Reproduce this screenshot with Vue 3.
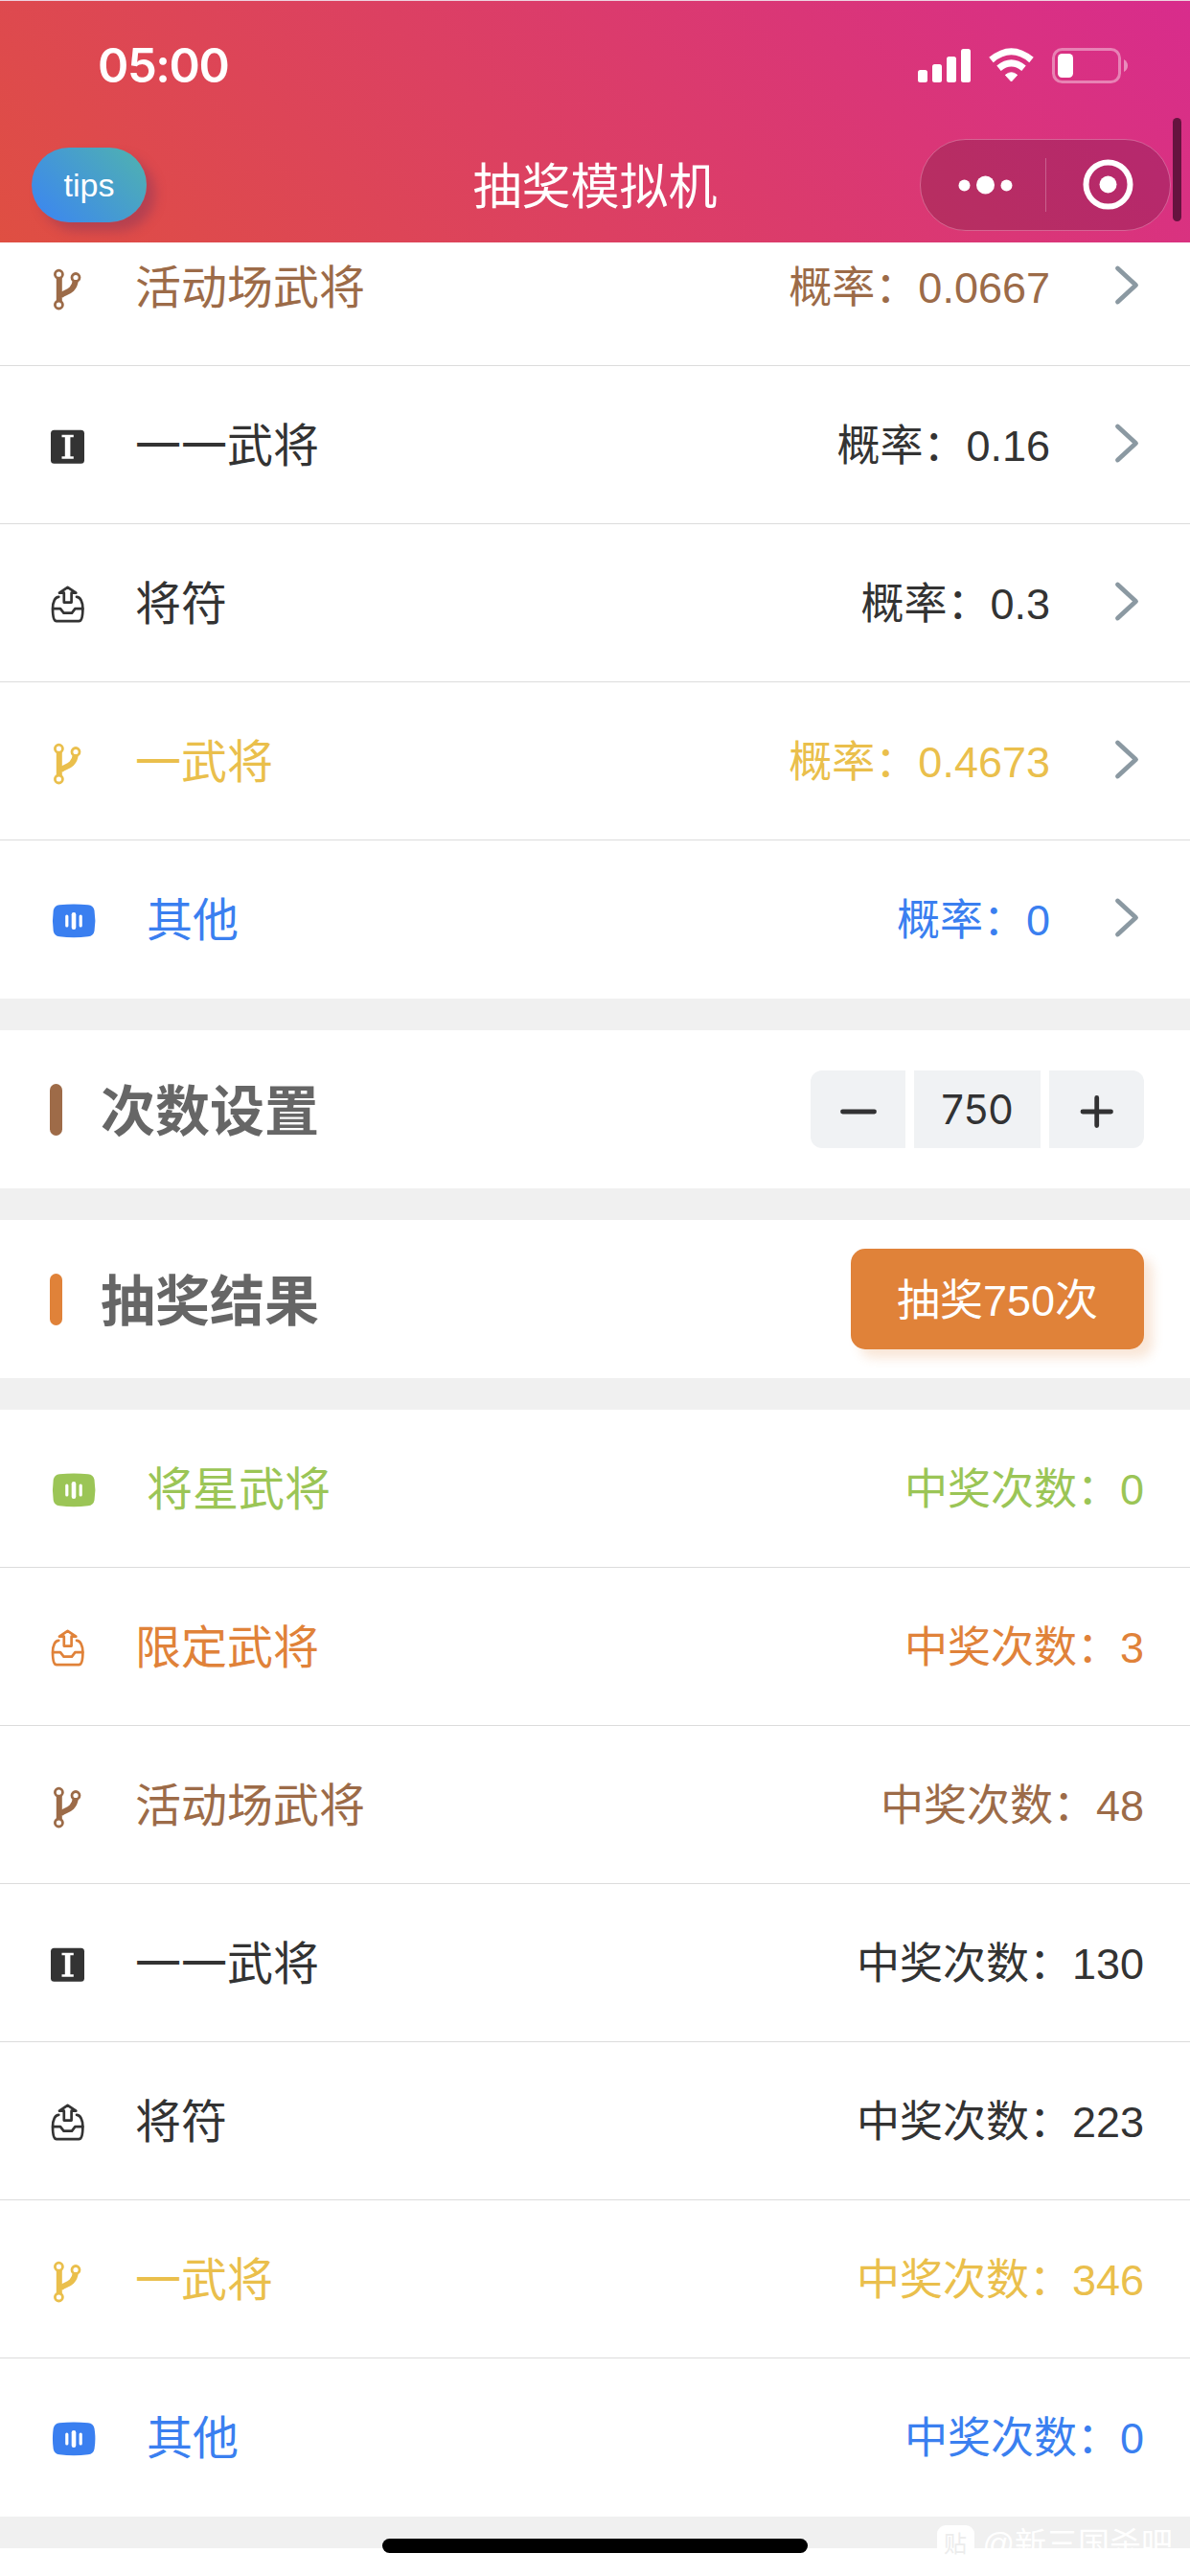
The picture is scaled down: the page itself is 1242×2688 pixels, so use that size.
<template>
  <div class="page">
    <header class="nav">
      <div class="status">
        <span class="clock">05:00</span>
        <svg class="signals" width="222" height="40" viewBox="0 0 222 40">
          <g fill="#fff">
            <rect x="0" y="24" width="10" height="13" rx="2.5" />
            <rect x="15" y="18" width="10" height="19" rx="2.5" />
            <rect x="30" y="10" width="10" height="27" rx="2.5" />
            <rect x="45" y="2" width="10" height="35" rx="2.5" />
            <path d="M97.500 36L91.300 29.300Q97.500 24.200 103.700 29.300Z" stroke="#fff" stroke-width="1" stroke-linejoin="round" />
          </g>
          <g fill="none" stroke="#fff" stroke-width="7">
            <path d="M76.500 13.500Q97.500 -4 118.500 13.500" />
            <path d="M84.500 22.200Q97.500 11.500 110.500 22.200" />
          </g>
          <rect x="141.500" y="2.500" width="69" height="34" rx="9" fill="none" stroke="#fff" stroke-opacity=".4" stroke-width="3" />
          <rect x="146" y="7" width="16" height="25" rx="4.500" fill="#fff" />
          <path d="M215 13Q219 15.500 219 19.500Q219 23.500 215 26Z" fill="#fff" fill-opacity=".45" />
        </svg>
      </div>
      <div class="bar">
        <div class="tips">tips</div>
        <div class="title">抽奖模拟机</div>
        <svg class="capsule" width="262" height="97" viewBox="0 0 262 97">
          <rect x=".5" y=".5" width="261" height="95" rx="47.500" fill="#000" fill-opacity=".16" stroke="#fff" stroke-opacity=".25" />
          <g fill="#fff">
            <circle cx="46.500" cy="48.500" r="6" />
            <circle cx="68.500" cy="48" r="9.500" />
            <circle cx="90.500" cy="48.500" r="6" />
            <circle cx="196.500" cy="47.500" r="9" />
          </g>
          <path d="M131.500 20V76" stroke="#fff" stroke-opacity=".25" />
          <circle cx="196.500" cy="47.500" r="23" fill="none" stroke="#fff" stroke-width="6" />
        </svg>
      </div>
      <div class="scrollbar" />
    </header>

    <main class="content">
      <template v-for="group in groups" :key="group.key">
        <section v-if="group.key === 'result'" class="panel">
          <i class="mark brown" />
          <h2>次数设置</h2>
          <div class="stepper">
            <button class="step" @click="times = Math.max(0, times - 1)">
              <svg width="40" height="40" viewBox="0 0 40 40"><path d="M3.500 22H36.500" /></svg>
            </button>
            <span class="count">{{ times }}</span>
            <button class="step" @click="times++">
              <svg width="40" height="40" viewBox="0 0 40 40"><path d="M5 22H34.500M19.700 7.500V36.500" /></svg>
            </button>
          </div>
        </section>
        <section v-if="group.key === 'result'" class="panel">
          <i class="mark orange" />
          <h2>抽奖结果</h2>
          <button class="draw">抽奖{{ times }}次</button>
        </section>

        <ul class="list" :class="group.key">
          <li v-for="item in group.items" :key="item.name" class="row" :class="item.color">
            <svg v-if="item.icon === 'branch'" class="icon" width="42" height="42" viewBox="0 0 42 42">
              <g fill="none" stroke="currentColor">
                <path d="M11.800 9V35" stroke-width="6" />
                <path d="M13 29.500C15 24.500 27.500 26 28.800 12.500" stroke-width="6" />
                <g stroke-width="2.800" fill="#fff">
                  <circle cx="11.400" cy="6.200" r="4" />
                  <circle cx="29" cy="9.500" r="4" />
                  <circle cx="11.400" cy="38" r="4" />
                </g>
              </g>
            </svg>
            <svg v-else-if="item.icon === 'card'" class="icon" width="42" height="42" viewBox="0 0 42 42">
              <rect x="3" y="3.700" width="35" height="35" rx="3.500" fill="currentColor" />
              <path d="M14.500 10H26.800M14.500 32.500H26.800" stroke="#fff" stroke-width="2.400" />
              <path d="M20.600 10V32.500" stroke="#fff" stroke-width="5.600" />
            </svg>
            <svg v-else-if="item.icon === 'tray'" class="icon" width="42" height="42" viewBox="0 0 42 42">
              <g fill="none" stroke="currentColor" stroke-width="2.700" stroke-linejoin="round" stroke-linecap="round">
                <path d="M20.600 2.800L12 8.700H16.800V18.600H24.600V8.700H29.300Z" />
                <path d="M11.300 12.800C7.500 12.800 5 18 5 25C5 31 5.800 38.200 9 38.200H32.300C35.500 38.200 36.400 31 36.400 25C36.400 18 33.800 12.800 30 12.800" />
                <path d="M5.200 25.200H13L16.500 29.600H25L28.400 25.200H36.200" />
              </g>
            </svg>
            <svg v-else class="icon" width="54" height="42" viewBox="0 0 54 42">
              <path d="M12 4.300Q27 2.500 42 4.300Q47.500 4.800 48.500 10Q50.300 20.700 48.500 31.500Q47.500 36.800 42 37.300Q27 39 12 37.300Q6.800 36.800 5.700 31.500Q4.200 20.700 5.700 10Q6.800 4.800 12 4.300Z" fill="currentColor" />
              <g stroke="#fff" stroke-linecap="round">
                <path d="M19.800 16V26M34.200 16V26" stroke-width="3.200" />
                <path d="M27 14.300V27.700" stroke-width="4.600" />
              </g>
            </svg>
            <span class="name">{{ item.name }}</span>
            <span class="value">{{ group.label }}：{{ item.value }}</span>
            <svg v-if="group.key === 'rate'" class="arrow" width="30" height="44" viewBox="0 0 30 44">
              <path d="M4.500 4L23.500 21.500L4.500 39" />
            </svg>
          </li>
        </ul>
      </template>
    </main>

    <footer class="footer">
      <div class="watermark"><span class="logo">贴</span>@新三国杀吧</div>
      <div class="home" />
    </footer>
  </div>
</template>

<script setup>
import { ref } from 'vue'

const times = ref(750)

const groups = [
  {
    key: 'rate',
    label: '概率',
    items: [
      { name: '活动场武将', value: '0.0667', icon: 'branch', color: 'brown' },
      { name: '一一武将', value: '0.16', icon: 'card', color: 'black' },
      { name: '将符', value: '0.3', icon: 'tray', color: 'black' },
      { name: '一武将', value: '0.4673', icon: 'branch', color: 'yellow' },
      { name: '其他', value: '0', icon: 'voice', color: 'blue' },
    ],
  },
  {
    key: 'result',
    label: '中奖次数',
    items: [
      { name: '将星武将', value: 0, icon: 'voice', color: 'green' },
      { name: '限定武将', value: 3, icon: 'tray', color: 'orange' },
      { name: '活动场武将', value: 48, icon: 'branch', color: 'brown' },
      { name: '一一武将', value: 130, icon: 'card', color: 'black' },
      { name: '将符', value: 223, icon: 'tray', color: 'black' },
      { name: '一武将', value: 346, icon: 'branch', color: 'yellow' },
      { name: '其他', value: 0, icon: 'voice', color: 'blue' },
    ],
  },
]
</script>

<style>
body {
  margin: 0;
  background: #fff;
}
</style>

<style scoped>
.page {
  position: relative;
  display: flex;
  flex-direction: column;
  width: 1242px;
  height: 2688px;
  overflow: hidden;
  background: #fff;
  font-family: "Liberation Sans", "Noto Sans CJK SC", sans-serif;
}

button {
  border: 0;
  padding: 0;
  font-family: inherit;
}

/* 顶部导航 */
.nav {
  position: relative;
  z-index: 2;
  flex: none;
  box-sizing: border-box;
  height: 253px;
  border-top: 1px solid #eed3e0;
  background: linear-gradient(45deg, #df4f42, #d82c8c);
  color: #fff;
}

.status {
  display: flex;
  justify-content: space-between;
  align-items: center;
  height: 135px;
  padding: 0 62px 0 102px;
}

.clock {
  font: 600 49px/60px Inter, sans-serif;
  letter-spacing: -1.4px;
}

.bar {
  display: grid;
  grid-template-columns: 1fr auto 1fr;
  align-items: center;
  height: 114px;
  padding: 0 20px 0 33px;
}

.tips {
  width: 120px;
  height: 78px;
  border-radius: 39px;
  background: linear-gradient(45deg, #3b84f3, #50b3ae);
  box-shadow: 9px 9px 12px rgba(120, 50, 90, 0.4);
  font-size: 34px;
  line-height: 78px;
  text-align: center;
}

.title {
  margin-left: -13px;
  padding-top: 5px;
  font-size: 51px;
  line-height: 72px;
}

.capsule {
  justify-self: end;
}

.scrollbar {
  position: absolute;
  top: 122px;
  right: 9px;
  width: 9px;
  height: 108px;
  border-radius: 5px;
  background: #66133f;
}

/* 列表整体向上滚动了一部分 */
.content {
  flex: none;
  display: flex;
  flex-direction: column;
  gap: 33px;
  margin-top: -36px;
  background: #f0f0f0;
}

.list {
  margin: 0;
  padding: 0;
  list-style: none;
}

.row {
  display: flex;
  align-items: center;
  box-sizing: border-box;
  height: 165px;
  padding: 0 48px 0 50px;
  background: #fff;
  border-bottom: 1px solid #dcdcdc;
}

.row:last-child {
  border-bottom-color: #fff;
}

.icon {
  flex: none;
  margin-top: 3px;
  overflow: visible;
}

.name {
  margin-left: 49px;
  padding-bottom: 6px;
  font-size: 48px;
}

.value {
  margin-left: auto;
  padding-bottom: 6px;
  font-size: 45px;
}

.arrow {
  margin: -2px 2px 0 66px;
  fill: none;
  stroke: #8b99a2;
  stroke-width: 4.800;
  stroke-linecap: round;
  stroke-linejoin: round;
}

.row.brown { color: #9c6b48; }
.row.black { color: #333; }
.row.yellow { color: #eabf4c; }
.row.blue { color: #3a7ff0; }
.row.green { color: #9bc556; }
.row.orange { color: #e08239; }

.panel {
  display: flex;
  align-items: center;
  height: 165px;
  padding: 0 48px 0 52px;
  background: #fff;
}

.mark {
  width: 13px;
  height: 54px;
  border-radius: 7px;
}

.mark.brown { background: #9e6b48; }
.mark.orange { background: #e08239; }

h2 {
  margin: 0 auto 0 40px;
  padding-bottom: 6px;
  color: #666;
  font-size: 57px;
  font-weight: 700;
}

.stepper {
  display: flex;
  gap: 9px;
  height: 81px;
  border-radius: 12px;
  overflow: hidden;
}

.step {
  display: flex;
  align-items: center;
  justify-content: center;
  width: 99px;
  background: #f0f2f4;
}

.step svg {
  stroke: #323233;
  stroke-width: 4.800;
  stroke-linecap: round;
}

.count {
  width: 132px;
  background: #f0f2f4;
  color: #323233;
  font: 400 42px/81px Inter, sans-serif;
  text-align: center;
}

.draw {
  width: 306px;
  height: 105px;
  padding-bottom: 4px;
  border-radius: 15px;
  background: #e08239;
  box-shadow: 9px 9px 12px rgba(224, 130, 57, 0.2);
  color: #fff;
  font-size: 45px;
}

.footer {
  position: relative;
  flex: none;
  height: 33px;
  background: #f0f0f0;
}

.watermark {
  display: flex;
  align-items: flex-start;
  justify-content: flex-end;
  gap: 9px;
  padding: 9px 18px 0 0;
  color: #fff;
  font-size: 33px;
  line-height: 39px;
}

.logo {
  width: 39px;
  height: 39px;
  border-radius: 9px;
  background: #fff;
  color: #ececec;
  font-size: 24px;
  text-align: center;
}

.home {
  position: absolute;
  top: 23px;
  left: 399px;
  width: 444px;
  height: 15px;
  border-radius: 8px;
  background: #000;
}
</style>
